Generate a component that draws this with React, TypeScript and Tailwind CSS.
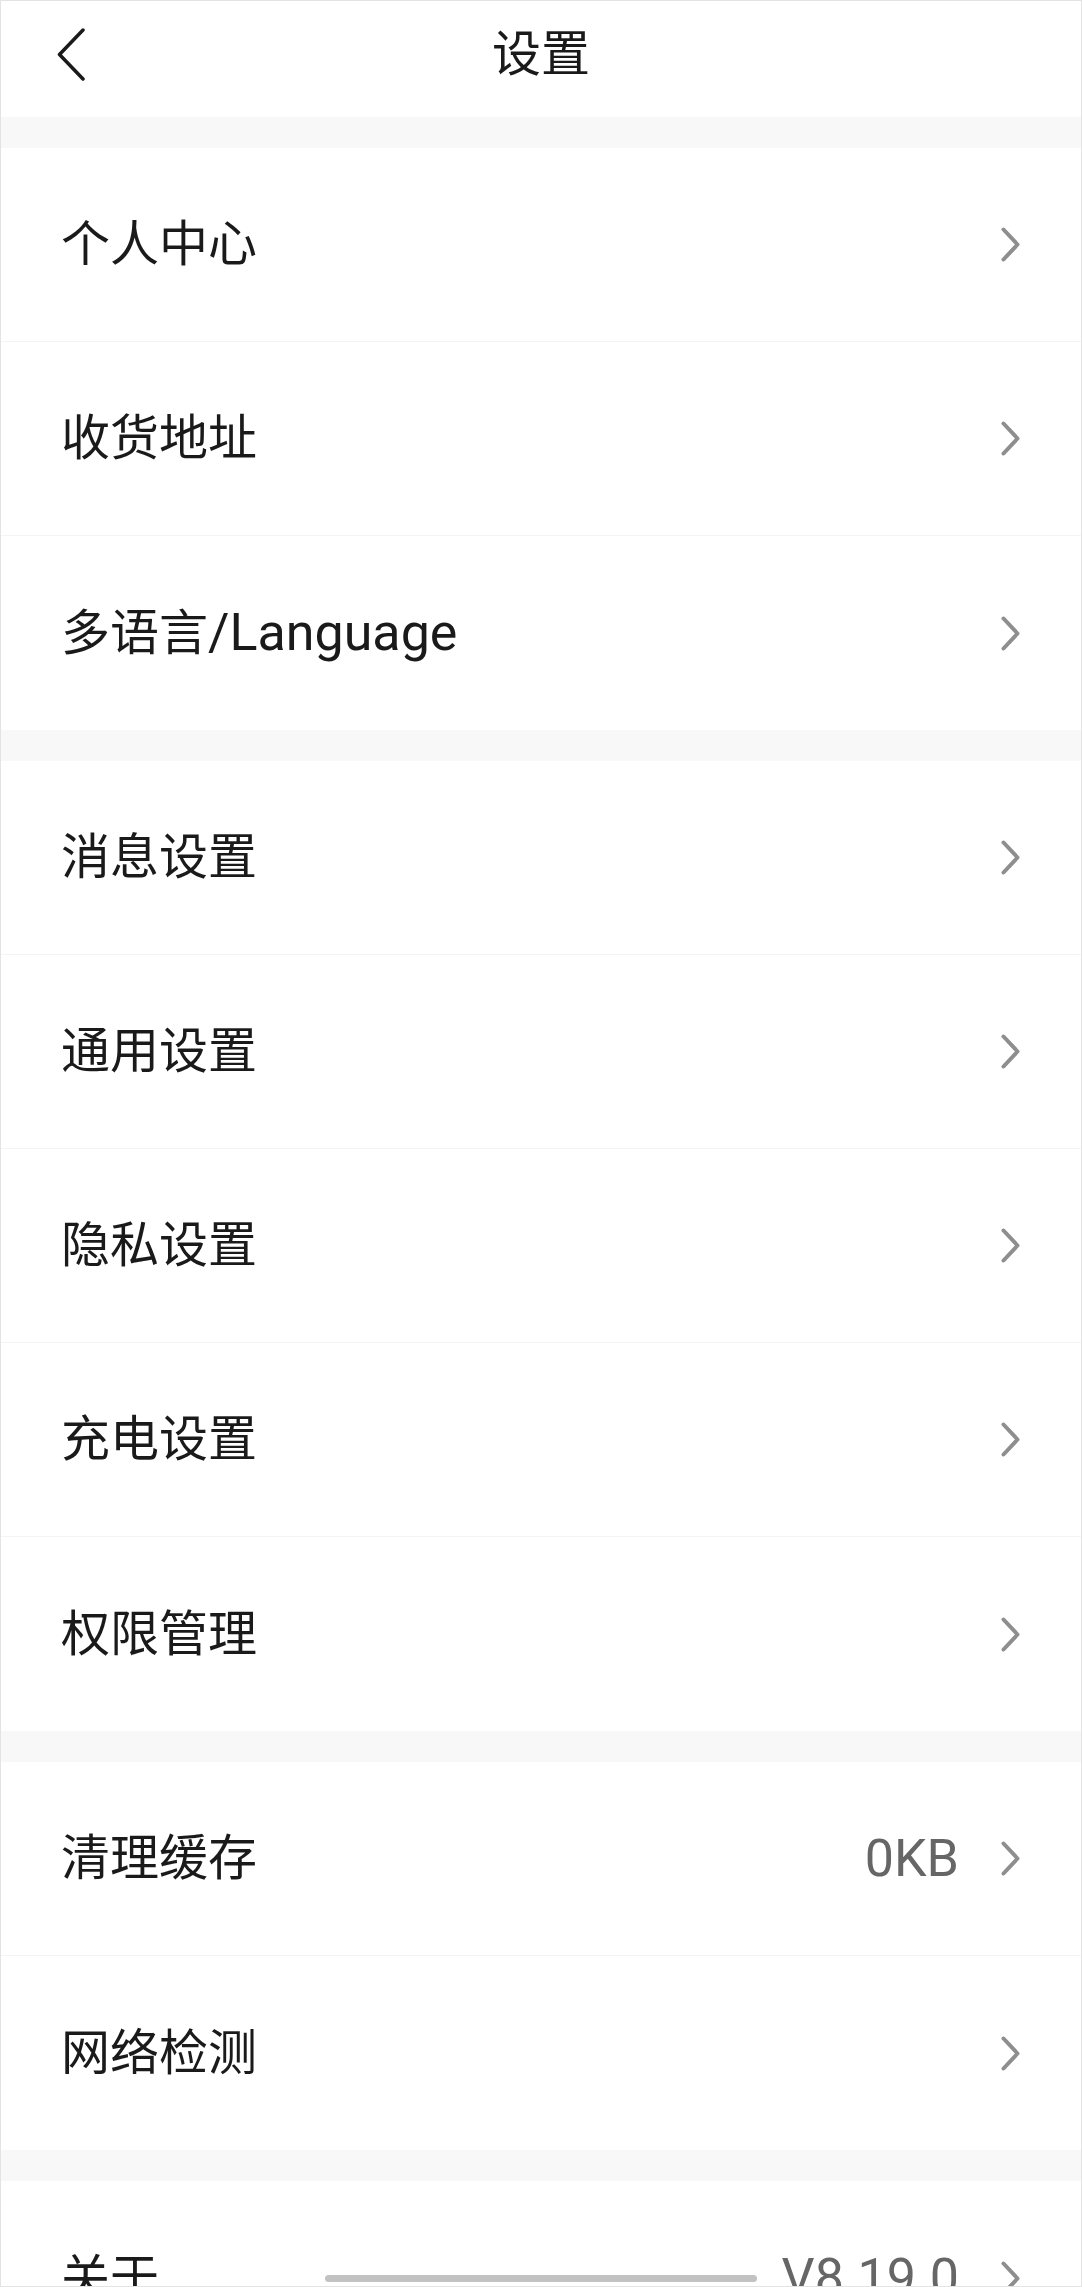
import { Fragment } from "react";

interface SettingItem {
  label: string;
  value?: string;
}

const groups: SettingItem[][] = [
  [{ label: "个人中心" }, { label: "收货地址" }, { label: "多语言/Language" }],
  [
    { label: "消息设置" },
    { label: "通用设置" },
    { label: "隐私设置" },
    { label: "充电设置" },
    { label: "权限管理" },
  ],
  [{ label: "清理缓存", value: "0KB" }, { label: "网络检测" }],
  [{ label: "关于", value: "V8.19.0" }],
];

// latin runs render a touch larger than the CJK glyphs, like the system font does
const MixedText = ({ text }: { text: string }) => (
  <>
    {text.split(/([\x20-\x7e]+)/).map((part, i) =>
      /^[\x20-\x7e]+$/.test(part) ? (
        <span key={i} className="text-[52px]">
          {part}
        </span>
      ) : (
        part
      )
    )}
  </>
);

const ChevronRight = () => (
  <svg width="19" height="35" viewBox="0 0 19 35" fill="none">
    <path
      d="M2.5 2.5 L16.5 17.5 L2.5 32.5"
      stroke="#8e8e8e"
      strokeWidth="4"
      strokeLinecap="round"
      strokeLinejoin="round"
    />
  </svg>
);

const BackArrow = () => (
  <svg width="28" height="53" viewBox="0 0 28 53" fill="none">
    <path
      d="M26 2 L2.5 26.5 L26 51"
      stroke="#1a1a1a"
      strokeWidth="3.5"
      strokeLinecap="round"
      strokeLinejoin="round"
    />
  </svg>
);

const SettingRow = ({ item, last }: { item: SettingItem; last: boolean }) => (
  <div
    className={`flex h-[194px] items-center justify-between pl-[60px] pr-[61px] ${
      last ? "" : "border-b border-[#f4f4f4]"
    }`}
  >
    <span className="text-[49px] leading-none text-[#1a1a1a]">
      <MixedText text={item.label} />
    </span>
    <div className="flex items-center gap-[42px]">
      {item.value && <span className="text-[52px] leading-none text-[#666666]">{item.value}</span>}
      <ChevronRight />
    </div>
  </div>
);

export default function App() {
  return (
    <div
      className="relative h-[2287px] w-[1082px] overflow-hidden border border-[#e3e3e3] bg-white"
      style={{ fontFamily: 'Roboto, "Noto Sans CJK SC", sans-serif' }}
    >
      <div className="grid h-[116px] grid-cols-[1fr_auto_1fr] items-center px-[56px] pb-[10px]">
        <BackArrow />
        <h1 className="text-[49px] font-normal leading-none text-[#1a1a1a]">设置</h1>
        <div />
      </div>

      {groups.map((group, gi) => (
        <Fragment key={gi}>
          <div className="h-[31px] bg-[#f8f8f8]" />
          <div className="bg-white">
            {group.map((item, i) => (
              <SettingRow key={item.label} item={item} last={i === group.length - 1} />
            ))}
          </div>
        </Fragment>
      ))}

      <div className="absolute bottom-[4px] left-1/2 h-[7px] w-[432px] -translate-x-1/2 rounded-full bg-[#c2c2c2]" />
    </div>
  );
}
